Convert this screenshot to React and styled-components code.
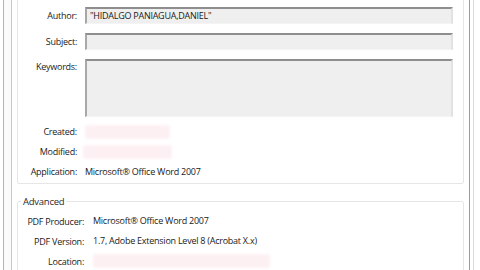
import React from "react";
import styled, { createGlobalStyle } from "styled-components";

const GlobalStyle = createGlobalStyle`
  html, body {
    margin: 0;
    padding: 0;
    background: #ffffff;
    overflow: hidden;
  }
  body {
    font-family: "Open Sans", "Noto Sans", sans-serif;
    font-size: 9px;
    letter-spacing: -0.25px;
    color: #1a1a1a;
  }
`;

const Window = styled.div`
  display: flex;
  width: 480px;
  height: 270px;
  overflow: hidden;
  background: #ffffff;
`;

const LeftFrame = styled.div`
  flex: none;
  width: 7px;
  margin-left: 3px;
  border-left: 1px solid #b4b4b4;
  border-right: 1px solid #c8c8c8;
  background: #fbfbfb;
`;

const RightFrame = styled.div`
  flex: none;
  width: 16px;
  display: flex;
`;

const RightLine = styled.div`
  width: 3px;
  margin-left: 5px;
  border-left: 1px solid #9a9a9a;
  border-right: 1px solid #dcdcdc;
`;

const Content = styled.div`
  flex: 1;
  min-width: 0;
  display: flex;
  flex-direction: column;
  padding-left: 5px;
`;

const Group = styled.fieldset`
  margin: ${(p) => (p.$top ? "-10px 0 0 0" : "11px 0 0 0")};
  padding: ${(p) => (p.$top ? "16px 0 6px 0" : "6px 0 10px 0")};
  border: 1px solid #e6e6e6;
  border-radius: 2px;
  min-width: 0;
`;

const Legend = styled.legend`
  padding: 0 2px;
  margin-left: 3px;
  font-size: 9.5px;
  line-height: 13px;
  color: #2a2a2a;
`;

const Form = styled.div`
  display: grid;
  grid-template-columns: ${(p) => p.$label}px 1fr;
  column-gap: ${(p) => p.$gap}px;
  row-gap: ${(p) => p.$rowGap}px;
  align-items: center;
  padding-right: 10px;
`;

const Label = styled.div`
  text-align: right;
  line-height: 11px;
  align-self: ${(p) => (p.$top ? "start" : "center")};
  padding-top: ${(p) => (p.$top ? "2px" : "0")};
  white-space: nowrap;
`;

const Field = styled.div`
  height: ${(p) => p.$h}px;
  box-sizing: border-box;
  background: #efefef;
  border-top: 2px solid #8e8e8e;
  border-left: 2px solid #a8a8a8;
  border-right: 2px solid #e2e2e2;
  border-bottom: 1px solid #f4f4f4;
  padding: 0 3px;
  line-height: ${(p) => p.$h - 4}px;
  white-space: nowrap;
`;

const Value = styled.div`
  height: ${(p) => p.$h || 14}px;
  line-height: ${(p) => p.$h || 14}px;
  white-space: nowrap;
  display: flex;
  align-items: center;
`;

const Smudge = styled.div`
  width: ${(p) => p.$w}px;
  height: 14px;
  flex: none;
  margin-left: ${(p) => p.$shift || 0}px;
  background: #fdf0f2;
  border-radius: 3px;
  filter: blur(1.5px);
`;

export default function App() {
  return (
    <>
      <GlobalStyle />
      <Window>
        <LeftFrame />
        <Content>
          <Group $top>
            <Form $label={59} $gap={8} $rowGap={9}>
              <Label>Author:</Label>
              <Field $h={17}>"HIDALGO PANIAGUA,DANIEL"</Field>
              <Label>Subject:</Label>
              <Field $h={17} />
              <Label $top>Keywords:</Label>
              <Field $h={58} />
              <Label>Created:</Label>
              <Value $h={11}>
                <Smudge $w={85} />
              </Value>
              <Label>Modified:</Label>
              <Value $h={11}>
                <Smudge $w={89} $shift={-2} />
              </Value>
              <Label>Application:</Label>
              <Value $h={11}>Microsoft® Office Word 2007</Value>
            </Form>
          </Group>
          <Group>
            <Legend>Advanced</Legend>
            <Form $label={66} $gap={9} $rowGap={6}>
              <Label>PDF Producer:</Label>
              <Value>Microsoft® Office Word 2007</Value>
              <Label>PDF Version:</Label>
              <Value>1.7, Adobe Extension Level 8 (Acrobat X.x)</Value>
              <Label>Location:</Label>
              <Value>
                <Smudge $w={177} />
              </Value>
            </Form>
          </Group>
        </Content>
        <RightFrame>
          <RightLine />
        </RightFrame>
      </Window>
    </>
  );
}
